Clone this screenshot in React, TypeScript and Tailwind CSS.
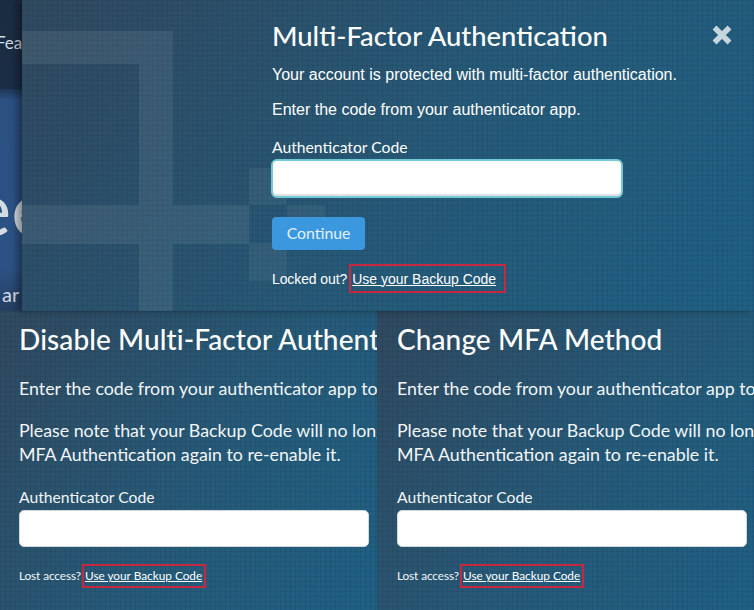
import type { ReactNode } from 'react';

const GRID =
  'bg-[linear-gradient(rgba(10,30,50,0.1)_1px,transparent_1px),linear-gradient(90deg,rgba(10,30,50,0.1)_1px,transparent_1px),linear-gradient(125deg,#30495f,#265a78_55%,#1f6083)] bg-[size:5px_5px,5px_5px,100%_100%]';
const BODY_FONT = "font-['Liberation_Sans',Arial,sans-serif]";
const TITLE_FONT = "font-['Lato',sans-serif]";

function BackupLink() {
  return (
    <a href="#" className="text-white underline">
      Use your Backup Code
    </a>
  );
}

function RedBox({ children, className }: { children: ReactNode; className: string }) {
  return <span className={`inline-flex items-center border-2 border-[#c8283f] ${className}`}>{children}</span>;
}

function CodePanel({ title, className = '' }: { title: string; className?: string }) {
  return (
    <section className={`w-[377px] shrink-0 overflow-hidden text-[#f2f6f8] ${TITLE_FONT} ${GRID} ${className}`}>
      <h2 className="mt-[11px] h-[34px] whitespace-nowrap text-[28px] leading-[34px] font-medium tracking-[0.1px] text-white">
        {title}
      </h2>
      <p className="mt-[20px] whitespace-nowrap text-[17.8px] leading-[24px]">
        Enter the code from your authenticator app to disable multi-factor
      </p>
      <p className="mt-[18px] whitespace-nowrap text-[17.8px] leading-[24px]">
        Please note that your Backup Code will no longer work. You will need to set up
        <br />
        MFA Authentication again to re-enable it.
      </p>
      <label className="mt-[20px] block text-[15.7px] leading-[22px]">Authenticator Code</label>
      <input className="mt-[2px] block h-[37px] w-[350px] rounded-[5px] border border-[#d5d8db] bg-white" />
      <p className="mt-[17px] flex items-center text-[11.8px] leading-[16px]">
        <span className="tracking-[-0.1px]">Lost access?</span>
        <RedBox className="ml-px h-[24px] pr-[2px] pl-px">
          <BackupLink />
        </RedBox>
      </p>
    </section>
  );
}

export default function App() {
  return (
    <div className="flex h-[610px] w-[754px] flex-col overflow-hidden">
      <div className="flex h-[311px] shrink-0">
        {/* clipped bit of the page behind the dialog */}
        <aside className={`flex w-[22px] shrink-0 flex-col overflow-hidden text-[#d4dbe2] ${TITLE_FONT}`}>
          <div className="h-[89px] shrink-0 bg-[linear-gradient(#1a2c40,#1a2d45)] pt-[31px]">
            <span className="-ml-[4px] block text-[17px] leading-[24px]">Features</span>
          </div>
          <div className="flex flex-1 flex-col bg-[linear-gradient(#1f3656,#2b5082_5%,#2c5285_80%,#253f63)]">
            <span className="mt-[88px] -ml-[29px] block h-[60px] text-[76px] leading-[60px] whitespace-nowrap">
              ee
            </span>
            <span className="mt-[43px] ml-[2px] block text-[20px] leading-[28px] whitespace-nowrap">ar</span>
          </div>
        </aside>

        <main className={`relative flex-1 overflow-hidden shadow-[-5px_0_7px_rgba(0,0,0,0.35)] ${GRID}`}>
          {/* faint logo watermark */}
          <div className="absolute top-[31px] left-0 h-[33px] w-[151px] bg-white/[0.07]" />
          <div className="absolute top-[64px] left-[117px] h-[247px] w-[34px] bg-white/[0.07]" />
          <div className="absolute top-[205px] left-0 h-[39px] w-[117px] bg-white/[0.07]" />
          <div className="absolute top-[205px] left-[151px] h-[39px] w-[76px] bg-white/[0.07]" />
          <div className="absolute top-[168px] left-[227px] h-[37px] w-[38px] bg-white/[0.05]" />
          <div className="absolute top-[243px] left-[227px] h-[38px] w-[38px] bg-white/[0.05]" />
          <div className="absolute top-[205px] left-[265px] h-[38px] w-[38px] bg-white/[0.05]" />

          <div className="relative pl-[250px] text-white">
            <div className="flex justify-between pt-[18px] pr-[21px]">
              <h1 className={`h-[36px] text-[27.4px] leading-[36px] font-medium ${TITLE_FONT}`}>
                Multi-Factor Authentication
              </h1>
              <svg width="20" height="20" viewBox="0 0 20 20" className="mt-[7px] -translate-x-px text-[#c6d6de]">
                <path d="M2.5 2.5 17.5 17.5M17.5 2.5 2.5 17.5" stroke="currentColor" strokeWidth="5.5" />
              </svg>
            </div>
            <p className={`mt-[11px] text-[16px] leading-[20px] ${BODY_FONT}`}>
              Your account is protected with multi-factor authentication.
            </p>
            <p className={`mt-[15px] text-[16px] leading-[20px] ${BODY_FONT}`}>
              Enter the code from your authenticator app.
            </p>
            <label className={`mt-[16px] block text-[15.7px] leading-[22px] ${TITLE_FONT}`}>Authenticator Code</label>
            <input className="mt-px block h-[39px] w-[352px] -translate-x-px rounded-[6px] border-2 border-[#72c9d3] bg-white shadow-[inset_0_-2px_0_#dfe2e5]" />
            <button
              type="button"
              className={`mt-[19px] block h-[33px] w-[93px] rounded-[4px] bg-[#3b98df] pb-[2px] text-[15.8px] text-[#e4f1fb] ${TITLE_FONT}`}
            >
              Continue
            </button>
            <p className={`mt-[14px] flex items-center text-[14px] leading-[16px] ${BODY_FONT}`}>
              <span className="tracking-[-0.1px]">Locked out?</span>
              <RedBox className="ml-[2px] h-[29px] pr-[8px] pl-px">
                <BackupLink />
              </RedBox>
            </p>
          </div>
        </main>
      </div>

      <div className="flex flex-1">
        <CodePanel title="Disable Multi-Factor Authentication" className="pl-[19px]" />
        <CodePanel title="Change MFA Method" className="pl-[20px]" />
      </div>
    </div>
  );
}
